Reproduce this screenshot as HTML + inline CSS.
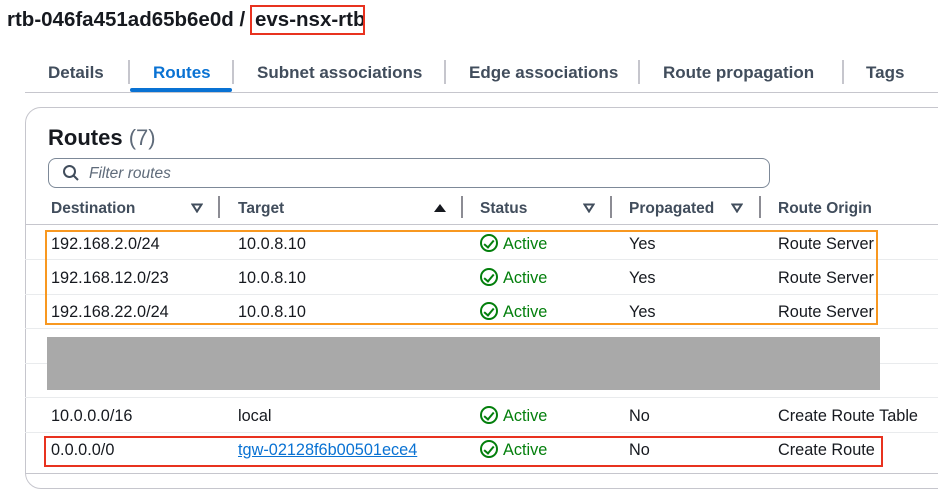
<!DOCTYPE html>
<html><head><style>
body{margin:0;width:938px;height:481px;overflow:hidden;background:#fff;font-family:"Liberation Sans",sans-serif;color:#16191f;position:relative}
.a{position:absolute;white-space:nowrap}
.tab{position:absolute;top:63px;font-size:17px;font-weight:bold;color:#414d5c}
.tsep{position:absolute;top:60px;width:2px;height:24px;background:#c6c6cd}
.hd{position:absolute;top:200px;font-size:15.5px;font-weight:bold;color:#414d5c}
.hs{position:absolute;top:196px;width:2px;height:22px;background:#8c8c94}
.tri{position:absolute;top:203px}
.hl{position:absolute;left:25px;right:0;height:1px;background:#e9ebed}
.c{position:absolute;font-size:16.3px}
.act{color:#037f0c}
.chk{position:absolute;width:14px;height:14px;border:2px solid #037f0c;border-radius:50%}
.chk:after{content:"";position:absolute;left:4px;top:1.5px;width:4px;height:8px;border:solid #037f0c;border-width:0 2px 2px 0;transform:rotate(40deg)}
</style></head><body>
<div class="a" style="left:7px;top:8px;font-size:20.5px;font-weight:bold">rtb-046fa451ad65b6e0d /</div>
<div class="a" style="left:255px;top:8px;font-size:20.5px;font-weight:bold">evs-nsx-rtb</div>
<div class="a" style="left:250px;top:5px;width:111px;height:26px;border:2px solid #e8321f"></div>

<div class="tab" style="left:48px">Details</div>
<div class="tsep" style="left:128px"></div>
<div class="tab" style="left:153px;color:#0972d3">Routes</div>
<div class="a" style="left:130px;top:88px;width:102px;height:4px;background:#0972d3;border-radius:2px"></div>
<div class="tsep" style="left:232px"></div>
<div class="tab" style="left:257px">Subnet associations</div>
<div class="tsep" style="left:444px"></div>
<div class="tab" style="left:469px">Edge associations</div>
<div class="tsep" style="left:638px"></div>
<div class="tab" style="left:663px">Route propagation</div>
<div class="tsep" style="left:842px"></div>
<div class="tab" style="left:866px">Tags</div>
<div class="a" style="left:25px;top:92px;right:0;height:1px;background:#c6c6cd"></div>

<div class="a" style="left:25px;top:107px;width:960px;height:380px;border:1px solid #c6c6cd;border-radius:16px"></div>
<div class="a" style="left:48px;top:125px;font-size:22px;font-weight:bold">Routes <span style="font-weight:normal;color:#5f6b7a">(7)</span></div>
<div class="a" style="left:48px;top:158px;width:720px;height:28px;border:1px solid #7d8998;border-radius:8px"></div>
<svg class="a" style="left:62px;top:164px" width="18" height="18" viewBox="0 0 18 18"><circle cx="7.5" cy="7.5" r="5.5" fill="none" stroke="#414d5c" stroke-width="2"/><path d="M11.5 11.5L16 16" stroke="#414d5c" stroke-width="2"/></svg>
<div class="a" style="left:89px;top:165px;font-size:15.5px;font-style:italic;color:#5f6b7a">Filter routes</div>

<div class="hd" style="left:51px">Destination</div>
<svg class="tri" style="left:191px" width="12" height="10"><path d="M1.5 1.5H10.5L6 8.5Z" fill="none" stroke="#414d5c" stroke-width="2"/></svg>
<div class="hs" style="left:218px"></div>
<div class="hd" style="left:238px">Target</div>
<svg class="tri" style="left:434px" width="12" height="10"><path d="M0 9H12L6 1Z" fill="#16191f"/></svg>
<div class="hs" style="left:461px"></div>
<div class="hd" style="left:480px">Status</div>
<svg class="tri" style="left:583px" width="12" height="10"><path d="M1.5 1.5H10.5L6 8.5Z" fill="none" stroke="#414d5c" stroke-width="2"/></svg>
<div class="hs" style="left:610px"></div>
<div class="hd" style="left:629px">Propagated</div>
<svg class="tri" style="left:731px" width="12" height="10"><path d="M1.5 1.5H10.5L6 8.5Z" fill="none" stroke="#414d5c" stroke-width="2"/></svg>
<div class="hs" style="left:759px"></div>
<div class="hd" style="left:778px">Route Origin</div>

<div class="hl" style="top:224px;background:#c6c6cd"></div>
<div class="hl" style="top:259px"></div>
<div class="hl" style="top:294px"></div>
<div class="hl" style="top:328px"></div>
<div class="hl" style="top:363px"></div>
<div class="hl" style="top:397px"></div>
<div class="hl" style="top:432px"></div>
<div class="hl" style="top:473px;background:#c6c6cd"></div>

<div class="c" style="left:51px;top:235px">192.168.2.0/24</div><div class="c" style="left:238px;top:235px">10.0.8.10</div>
<div class="chk" style="left:480px;top:234px"></div><div class="c act" style="left:503px;top:235px">Active</div>
<div class="c" style="left:629px;top:235px">Yes</div><div class="c" style="left:778px;top:235px">Route Server</div>

<div class="c" style="left:51px;top:269px">192.168.12.0/23</div><div class="c" style="left:238px;top:269px">10.0.8.10</div>
<div class="chk" style="left:480px;top:268px"></div><div class="c act" style="left:503px;top:269px">Active</div>
<div class="c" style="left:629px;top:269px">Yes</div><div class="c" style="left:778px;top:269px">Route Server</div>

<div class="c" style="left:51px;top:303px">192.168.22.0/24</div><div class="c" style="left:238px;top:303px">10.0.8.10</div>
<div class="chk" style="left:480px;top:302px"></div><div class="c act" style="left:503px;top:303px">Active</div>
<div class="c" style="left:629px;top:303px">Yes</div><div class="c" style="left:778px;top:303px">Route Server</div>

<div class="a" style="left:45px;top:230px;width:829px;height:91px;border:2px solid #f89820"></div>
<div class="a" style="left:47px;top:337px;width:833px;height:53px;background:#a9a9a9"></div>

<div class="c" style="left:51px;top:407px">10.0.0.0/16</div><div class="c" style="left:238px;top:407px">local</div>
<div class="chk" style="left:480px;top:406px"></div><div class="c act" style="left:503px;top:407px">Active</div>
<div class="c" style="left:629px;top:407px">No</div><div class="c" style="left:778px;top:407px">Create Route Table</div>

<div class="c" style="left:51px;top:441px">0.0.0.0/0</div><div class="c" style="left:238px;top:441px;color:#0972d3;text-decoration:underline">tgw-02128f6b00501ece4</div>
<div class="chk" style="left:480px;top:440px"></div><div class="c act" style="left:503px;top:441px">Active</div>
<div class="c" style="left:629px;top:441px">No</div><div class="c" style="left:778px;top:441px">Create Route</div>
<div class="a" style="left:44px;top:436px;width:835px;height:27px;border:2px solid #e8321f"></div>
</body></html>
